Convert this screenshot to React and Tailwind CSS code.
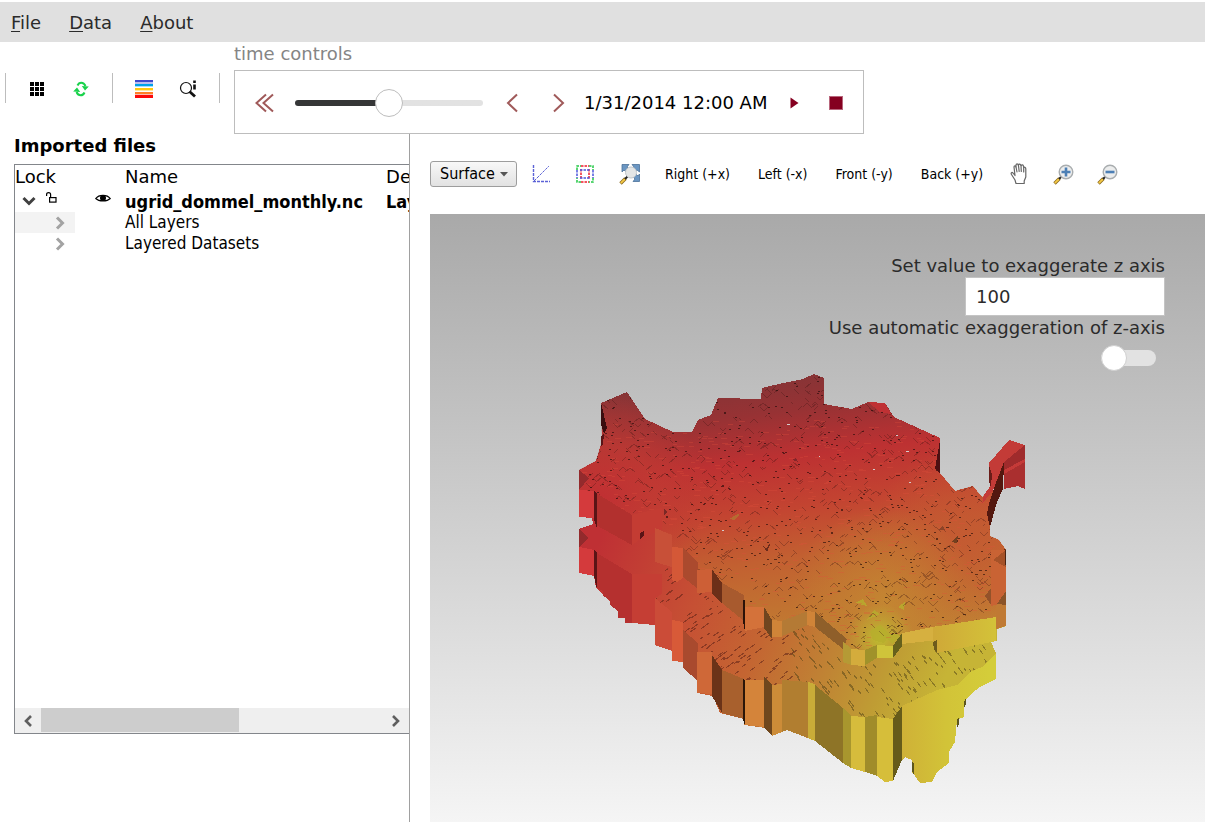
import React from "react";

const TOP_SURFACE =
  "579,470 596,461 602,441 601,403 627,392 645,419 673,432 692,432 698,420 711,415 718,398 761,399 762,388 783,383 803,379 814,374 824,378 824,404 852,409 868,402 885,403 894,417 940,438 940,473 955,491 973,486 982,497 993,486 990,527 990,536 999,540 1006,550 1006,600 996,617 902,633 893,648 877,645 865,650 843,647 847,639 815,612 807,611 782,621 772,620 763,607 744,607 743,595 722,583 712,569 698,570 698,562 683,548 672,547 672,535 655,528 662,508 632,515 596,493 594,491 579,490";

const BODY =
  "579,470 596,461 602,441 610,440 780,430 930,473 980,560 1006,600 1006,626 997,629 997,641 991,642 996,653 996,679 980,687 972,693 964,702 964,717 957,720 955,742 949,752 949,763 937,772 932,782 920,783 912,772 912,760 905,757 900,763 893,781 885,782 877,776 850,767 843,763 815,741 800,735 787,730 772,736 765,728 744,725 744,719 720,713 713,696 697,693 697,680 683,668 683,662 672,661 672,651 655,645 655,625 632,623 596,588 594,576 579,573 579,529 593,524 592,518 579,517";

const SHELF =
  "579,547 579,529 593,524 640,530 655,560 700,590 745,630 800,625 850,665 893,660 940,650 991,642 996,653 980,668 957,685 937,690 902,706 893,719 851,716 815,685 772,685 744,680 721,670 698,652 683,630 655,598 632,574 597,553";

const LOWER_WALLS = [
  ["579,547 594,550 594,576 579,573", "#d43a3c"],
  ["579,529 589,538 579,547", "#932a2c"],
  ["597,553 632,574 632,623 625,623 625,618 618,618 618,611 610,605 610,600 603,596 603,591 597,588", "#b5302f"],
  ["594,549 597,553 597,589 594,576", "#5a1416"],
  ["632,574 662,574 662,594 655,598 655,625 632,623", "#c53e34"],
  ["655,598 672,612 672,651 655,645", "#cb4c38"],
  ["672,620 683,622 683,662 672,661", "#d85a38"],
  ["683,630 698,643 698,681 683,668", "#a94a2e"],
  ["697,652 712,652 712,694 697,693", "#cf6838"],
  ["712,655 722,670 722,713 712,696", "#6b3318"],
  ["722,670 744,679 744,719 722,713", "#a8602d"],
  ["745,680 764,680 764,727 745,725", "#d4843a"],
  ["743,679 745,680 745,725 743,719", "#2b1608"],
  ["764,677 772,685 772,736 764,727", "#6f471d"],
  ["772,685 782,684 782,732 772,736", "#cc8c38"],
  ["782,680 808,682 808,738 800,735 787,730 782,732", "#b17e30"],
  ["808,682 815,684 815,741 808,738", "#c9ac38"],
  ["815,685 843,708 843,763 815,741", "#8e7427"],
  ["843,708 851,716 851,768 843,763", "#a8962e"],
  ["851,716 865,717 865,772 851,768", "#d6bc3c"],
  ["865,717 877,715 877,776 865,772", "#a08c2a"],
  ["877,717 893,719 893,781 885,782 877,776", "#d6be3a"],
  ["893,719 902,706 902,760 893,781", "#665b1a"],
  [
    "902,706 937,690 957,685 970,672 982,667 996,653 996,679 980,687 972,693 964,702 964,717 957,720 955,742 949,752 949,763 937,772 932,782 920,783 912,772 912,760 905,757 902,759",
    "url(#yellowWall)",
  ],
  ["964,702 966,698 966,704 964,708", "#5c551c"],
  ["957,720 959,717 959,724 957,728", "#5c551c"],
  ["912,762 914,764 914,775 912,771", "#5c551c"],
];

const UPPER_WALLS = [
  ["579,490 594,491 594,518 579,517", "#d43a3c"],
  ["596,493 632,515 632,545 596,525", "#b2302e"],
  ["594,491 597,494 597,528 594,519", "#5a1416"],
  ["632,515 662,508 662,530 645,536 632,545", "#c43c33"],
  ["640,533 644,531 644,536 640,539", "#5a1416"],
  ["655,528 672,535 672,567 655,562", "#c85038"],
  ["672,547 683,548 683,578 677,582 672,580", "#d45837"],
  ["683,548 698,562 698,589 683,577", "#ab4a2e"],
  ["697,570 712,569 712,592 697,593", "#cd5f36"],
  ["712,569 722,583 722,604 712,593", "#6c2f18"],
  ["722,583 744,595 744,621 722,603", "#a85a2e"],
  ["745,607 764,607 764,627 745,631", "#d4723a"],
  ["743,600 745,600 745,631 743,621", "#2b1208"],
  ["764,607 772,620 772,639 764,628", "#70451f"],
  ["772,620 782,621 782,637 772,637", "#cf8438"],
  ["782,621 808,611 808,625 782,636", "#b47a35"],
  ["807,611 815,612 815,627 807,625", "#d08438"],
  ["815,612 847,639 843,649 815,627", "#8f5f2a"],
  ["843,642 851,648 851,665 843,662", "#b59a35"],
  ["851,649 865,650 865,666 851,665", "#d4ac3c"],
  ["865,650 877,645 877,658 865,665", "#a0922a"],
  ["877,645 893,646 893,658 877,658", "#cfc43a"],
  ["893,646 902,633 902,646 893,658", "#66601c"],
  ["902,633 937,626 937,640 902,644", "#d6b040"],
  ["933,627 996,617 996,641 937,653 933,643", "url(#upperYellow)"],
  ["933,642 937,640 937,652 934,650", "#6d5a1c"],
  ["996,600 1006,600 1006,626 996,629", "#c07a34"],
  ["991,550 1006,550 1006,602 991,606", "#c96334"],
  ["985,596 991,588 991,605", "#94522a"],
  ["993,560 1006,550 1006,567", "#a65228"],
  ["997,604 1006,591 1006,605", "#8c5428"],
  ["1005,550 1006,550 1006,565 1005,565", "#4b2412"],
];

const DETAILS = [
  ["579,470 589,478 579,490", "#932a2c"],
  ["601,403 607,428 604,434 601,424", "#3a0d0f"],
  ["601,436 604,434 603,444 601,447", "#5a1416"],
  ["940,440 940,473 935,469", "#4c1012"],
  ["868,402 885,403 891,414 880,412", "#bf3134"],
  ["989,463 1009,440 1025,445 1003,463 1001,480 982,504 984,495 991,485", "#c33b37"],
  ["1004,462 1025,445 1025,460 1004,472", "#9f2b2c"],
  ["1004,474 1025,461 1025,489 1018,486 1004,489", "#aa2f2f"],
  ["1004,470 1025,459 1025,462 1004,474", "#c53a38"],
  ["1004,462 1003,489 997,502 990,527 987,514 989,503 997,480", "#54180f"],
  ["989,466 992,474 991,487 989,482", "#6a1c18"],
  ["792,460 796,458 798,462", "#84262a"],
  ["729,519 738,514 740,515 734,520", "#b66b31"],
  ["761,543 766,549 771,542 767,552", "#6c2c1c"],
  ["951,542 958,536 957,543", "#74401f"],
  ["938,530 943,526 945,530", "#8d4428"],
  ["664,509 668,512 664,515", "#7c2825"],
];

const GREEN_PATCHES = [
  "870,631 880,625 890,634 884,643 873,640",
  "855,603 863,599 867,606",
  "885,636 895,632 900,636 892,644",
  "867,620 874,610 880,614",
  "898,607 905,602 904,610",
];

function createRandom(seed) {
  let state = seed;
  return () => {
    state = (state * 1664525 + 1013904223) % 4294967296;
    return state / 4294967296;
  };
}

function scatter(seed, count, [x0, y0, x1, y1], makeMark) {
  const random = createRandom(seed);
  let path = "";
  for (let i = 0; i < count; i += 1) {
    const x = Math.round(x0 + random() * (x1 - x0));
    const y = Math.round(y0 + random() * (y1 - y0));
    path += makeMark(x, y, random);
  }
  return path;
}

const cellMarks = scatter(17, 950, [578, 376, 1008, 652], (x, y, random) => {
  const run = 2 + Math.round(random() * 4);
  const slope = random() > 0.45 ? -1 : 1;
  const rise = Math.round(run * 0.9 * slope);
  const hook = random() > 0.7 ? `l${run} ${-rise}` : "";
  return `M${x} ${y}l${run} ${rise}${hook}`;
});
const cellDots = scatter(41, 1000, [578, 376, 1008, 652], (x, y) => `M${x} ${y}h1.5`);
const cellHighlights = scatter(93, 700, [578, 420, 1008, 652], (x, y, random) => {
  return `M${x} ${y}h${3 + Math.round(random() * 4)}`;
});
const ridgeMarks = scatter(7, 230, [650, 570, 790, 690], (x, y, random) => {
  const run = 3 + Math.round(random() * 5);
  return `M${x} ${y}l${run} ${-Math.round(run * 0.7)}`;
});
const ridgeMarksRight = scatter(29, 280, [790, 620, 996, 720], (x, y, random) => {
  const run = 2 + Math.round(random() * 3);
  return `M${x} ${y}l${run} ${Math.round(run * 1.3)}`;
});

function Facets({ items }) {
  return items.map(([points, fill]) => <polygon key={points} points={points} fill={fill} />);
}

function TerrainModel() {
  return (
    <svg
      className="absolute inset-0 h-full w-full"
      viewBox="430 214 775 608"
      preserveAspectRatio="xMinYMin meet"
      role="img"
      aria-label="Layered terrain model"
    >
      <defs>
        <linearGradient id="surface" gradientUnits="userSpaceOnUse" x1="775" y1="376" x2="810" y2="650">
          <stop offset="0" stopColor="#863436" />
          <stop offset="0.13" stopColor="#973234" />
          <stop offset="0.3" stopColor="#bd3132" />
          <stop offset="0.48" stopColor="#c34431" />
          <stop offset="0.66" stopColor="#c26031" />
          <stop offset="0.85" stopColor="#c17431" />
          <stop offset="1" stopColor="#c08334" />
        </linearGradient>
        <linearGradient id="shelf" gradientUnits="userSpaceOnUse" x1="600" y1="540" x2="940" y2="690">
          <stop offset="0" stopColor="#bf3034" />
          <stop offset="0.3" stopColor="#c65034" />
          <stop offset="0.5" stopColor="#c46532" />
          <stop offset="0.68" stopColor="#c08034" />
          <stop offset="0.85" stopColor="#bf9c34" />
          <stop offset="1" stopColor="#c6b436" />
        </linearGradient>
        <linearGradient id="yellowWall" gradientUnits="userSpaceOnUse" x1="902" y1="0" x2="990" y2="0">
          <stop offset="0" stopColor="#cfb137" />
          <stop offset="0.5" stopColor="#d2c338" />
          <stop offset="1" stopColor="#d4cd3a" />
        </linearGradient>
        <linearGradient id="upperYellow" x1="0" y1="0" x2="1" y2="0">
          <stop offset="0" stopColor="#cfa838" />
          <stop offset="1" stopColor="#d3c239" />
        </linearGradient>
        <radialGradient id="redGlow" gradientUnits="userSpaceOnUse" cx="600" cy="500" r="110">
          <stop offset="0" stopColor="#c02f33" />
          <stop offset="0.5" stopColor="#c13a33" stopOpacity="0.7" />
          <stop offset="1" stopColor="#c13a33" stopOpacity="0" />
        </radialGradient>
        <radialGradient id="goldGlow" gradientUnits="userSpaceOnUse" cx="885" cy="602" r="95">
          <stop offset="0" stopColor="#c48a32" stopOpacity="0.8" />
          <stop offset="0.5" stopColor="#c38232" stopOpacity="0.5" />
          <stop offset="1" stopColor="#c38232" stopOpacity="0" />
        </radialGradient>
        <radialGradient id="limeGlow" gradientUnits="userSpaceOnUse" cx="880" cy="638" r="34">
          <stop offset="0" stopColor="#bcc02f" />
          <stop offset="0.5" stopColor="#bfa832" stopOpacity="0.7" />
          <stop offset="1" stopColor="#bfa832" stopOpacity="0" />
        </radialGradient>
        <radialGradient id="orangeGlow" gradientUnits="userSpaceOnUse" cx="960" cy="540" r="90">
          <stop offset="0" stopColor="#c45a32" stopOpacity="0.9" />
          <stop offset="1" stopColor="#c45a32" stopOpacity="0" />
        </radialGradient>
        <clipPath id="surfaceClip">
          <polygon points={TOP_SURFACE} />
        </clipPath>
        <clipPath id="shelfClip">
          <polygon points={SHELF} />
        </clipPath>
      </defs>

      <g shapeRendering="crispEdges">
        <polygon points={BODY} fill="url(#shelf)" />
        <g clipPath="url(#shelfClip)" fill="none">
          <path d={ridgeMarks} stroke="#5c2116" strokeOpacity="0.55" />
          <path d={ridgeMarksRight} stroke="#4f4216" strokeOpacity="0.5" />
        </g>
        <Facets items={LOWER_WALLS} />

        <polygon points={TOP_SURFACE} fill="url(#surface)" />
        <g clipPath="url(#surfaceClip)">
          <rect x="570" y="370" width="440" height="290" fill="url(#orangeGlow)" />
          <rect x="570" y="370" width="440" height="290" fill="url(#redGlow)" />
          <rect x="570" y="370" width="440" height="290" fill="url(#goldGlow)" />
          <rect x="570" y="370" width="440" height="290" fill="url(#limeGlow)" />
          {GREEN_PATCHES.map((points) => (
            <polygon key={points} points={points} fill="#b6ae2d" fillOpacity="0.8" />
          ))}
          <path d={cellHighlights} stroke="#e0503c" strokeOpacity="0.3" fill="none" />
          <path d={cellMarks} stroke="#3d1410" strokeOpacity="0.3" fill="none" />
          <path d={cellDots} stroke="#1d0806" strokeOpacity="0.6" fill="none" />
          <path d="M787 424h3M722 530h2M896 435h2M906 451h3M873 469h2M909 482h2M819 456h1" stroke="#d5cccc" fill="none" />
        </g>
        <Facets items={UPPER_WALLS} />
        <Facets items={DETAILS} />
      </g>
    </svg>
  );
}

function GridIcon() {
  return (
    <svg width="14" height="14" viewBox="0 0 14 14" fill="#000" aria-hidden="true">
      {[0, 5, 10].map((y) => [0, 5, 10].map((x) => <rect key={`${x}-${y}`} x={x} y={y} width="4" height="4" />))}
    </svg>
  );
}

function RefreshIcon() {
  return (
    <svg width="16" height="16" viewBox="0 0 16 16" fill="none" stroke="#19d24b" strokeWidth="2" aria-hidden="true">
      <path d="M4.500 4.500C6 1 10.500 0.500 12.500 5" />
      <path d="M11.500 11.500C10 15 5.500 15.500 3.500 11" />
      <path d="M8.800 5L15.800 5.400 12 9.400zM7.200 11L.2 10.600 4 6.600z" fill="#19d24b" stroke="none" />
    </svg>
  );
}

function ColorBarsIcon() {
  return (
    <svg width="18" height="18" viewBox="0 0 18 18" shapeRendering="crispEdges" aria-hidden="true">
      <rect width="18" height="18" fill="#fff" />
      <rect y="0" width="18" height="2" fill="#3f48cc" />
      <rect y="2" width="18" height="2" fill="#b9bdf0" />
      <rect y="4" width="18" height="2" fill="#00a2e8" />
      <rect y="6" width="18" height="1" fill="#a5def6" />
      <rect y="8" width="18" height="2" fill="#ffc90e" />
      <rect y="10" width="18" height="1" fill="#ffe9a0" />
      <rect y="12" width="18" height="2" fill="#ff7f27" />
      <rect y="14" width="18" height="1" fill="#ffb9b0" />
      <rect y="15" width="18" height="3" fill="#fb0a0a" />
    </svg>
  );
}

function InspectIcon() {
  return (
    <svg width="18" height="18" viewBox="0 0 18 18" fill="none" stroke="#111" aria-hidden="true">
      <circle cx="7" cy="8" r="5.500" strokeWidth="1.200" />
      <path d="M10.500 11.500l5.500 5" strokeWidth="2.800" />
      <path d="M15.500 0.500v2.500M15.500 4.500v5" strokeWidth="2.600" />
    </svg>
  );
}

function ChevronIcon({ direction, double = false }) {
  return (
    <svg width="20" height="20" viewBox="0 0 20 20" fill="none" stroke="#a05a5a" strokeWidth="2" aria-hidden="true">
      {double ? (
        <path d="M12 1.500L2.500 10l9.500 8.500M19 1.500L9.500 10l9.500 8.500" />
      ) : direction === "left" ? (
        <path d="M15 1.500L6 10l9 8.500" />
      ) : (
        <path d="M6 1.500L15 10l-9 8.500" />
      )}
    </svg>
  );
}

function AxesIcon() {
  return (
    <svg width="18" height="18" viewBox="0 0 18 18" fill="none" stroke="#5b62d6" strokeDasharray="3 1" aria-hidden="true">
      <path d="M1.500 0v16.500H18" strokeWidth="1.400" />
      <path d="M2 16L17 1" strokeWidth="1" />
    </svg>
  );
}

function BoundsIcon() {
  return (
    <svg width="18" height="18" viewBox="0 0 18 18" fill="none" strokeWidth="1.500" strokeDasharray="2.500 1" aria-hidden="true">
      <path d="M1 5V1h4M13 1h4v4M17 13v4h-4M5 17H1v-4" stroke="#22c744" />
      <path d="M5 1h8M5 17h8M5 4v10M13 4v10" stroke="#f01c2c" />
      <path d="M1 5v8M17 5v8M4 5h10M4 13h10" stroke="#4b55dd" />
    </svg>
  );
}

function MagnifierHandle() {
  return (
    <>
      <path d="M1.500 19.500L6.500 14.500" stroke="#8a6a20" strokeWidth="3.400" />
      <path d="M1.800 19.200L6 15" stroke="#f5c945" strokeWidth="1.800" />
      <path d="M6 15l2.500-2.500" stroke="#222" strokeWidth="2" />
    </>
  );
}

function FitIcon() {
  return (
    <svg width="21" height="21" viewBox="0 0 21 21" fill="none" aria-hidden="true">
      <MagnifierHandle />
      <path
        d="M3 0.500h7L8 3l2 2-3 3-2-2-2 2zM13 0.500h7.500V8L18 6l-2 2-3-3 2-2zM20.500 10v7.500H14L16 15l-2-2 3-3 2 2z"
        fill="#6b96c2"
        stroke="#4a7199"
        strokeWidth="0.800"
      />
      <circle cx="12" cy="8.500" r="5.500" fill="#e4e6e6" stroke="#c2c6c9" />
    </svg>
  );
}

function ZoomIcon({ plus = false }) {
  return (
    <svg width="21" height="21" viewBox="0 0 21 21" fill="none" aria-hidden="true">
      <MagnifierHandle />
      <circle cx="13" cy="8" r="6.800" fill="#eceded" stroke="#a9adaf" strokeWidth="1.400" />
      <path d={plus ? "M8.500 8h9M13 3.500v9" : "M8.500 8h9"} stroke="#4c7fb5" strokeWidth="2.600" />
    </svg>
  );
}

function HandIcon() {
  return (
    <svg width="18" height="22" viewBox="0 0 18 22" fill="#fff" stroke="#666" strokeWidth="1.200" strokeLinejoin="round" strokeLinecap="round" aria-hidden="true">
      <path d="M6 20.500L5 17 1.500 11.500C.5 9.500 2 9 3 10l2 2.500L4 4c0-1.500 1.800-1.500 2 0V2c.2-1.500 2-1.500 2.200 0l.3 0c.3-1.300 2-1.200 2.300.2l.4.300c.6-1 2-.7 2.200.5l.4 1.500c1-.7 2 .1 2 1.500v8l-1.600 4v2.500z" />
      <path d="M6 4l1 5M8.400 2l.8 6.500M11 2.500l.3 6M13.700 4.500v4.500" fill="none" />
    </svg>
  );
}

function LockIcon() {
  return (
    <svg width="11" height="11" viewBox="0 0 11 11" fill="none" stroke="#000" strokeWidth="1.200" aria-hidden="true">
      <rect x="3.600" y="5.600" width="6.400" height="4.500" />
      <path d="M.6 4V2.500C.6 1 1.500.6 2.600.6S4.600 1.500 4.600 2.500V5.500" />
    </svg>
  );
}

function EyeIcon() {
  return (
    <svg width="16" height="8" viewBox="0 0 16 8" aria-hidden="true">
      <path d="M.7 4.500C4 .3 12 .3 15.300 4.500 12 7.700 4 7.700.7 4.500z" fill="#fff" stroke="#000" strokeWidth="1.100" />
      <circle cx="8" cy="4" r="3" fill="#000" />
    </svg>
  );
}

function TreeArrow({ open = false }) {
  return (
    <svg width="14" height="14" viewBox="0 0 14 14" fill="none" stroke={open ? "#404040" : "#a3a3a3"} strokeWidth="3" aria-hidden="true">
      <path d={open ? "M1.500 3l5.500 5.500L12.500 3" : "M4 1.500L9.500 7 4 12.500"} />
    </svg>
  );
}

function ScrollArrow({ direction }) {
  return (
    <svg width="12" height="12" viewBox="0 0 12 12" fill="none" stroke="#5f5f5f" strokeWidth="2.600" aria-hidden="true">
      <path d={direction === "left" ? "M9 1L4 6l5 5" : "M3 1l5 5-5 5"} />
    </svg>
  );
}

function ToolButton({ label, children }) {
  return (
    <button type="button" aria-label={label} className="flex h-8 w-11 shrink-0 items-center justify-center">
      {children}
    </button>
  );
}

function Separator() {
  return <div className="h-[30px] w-px bg-[#bdbdbd]" />;
}

function MenuBar() {
  return (
    <nav className="mt-0.5 flex h-10 items-center gap-7 bg-[#e0e0e0] pt-0.5 pl-[11px] text-lg text-[#2b2b2b]">
      {["File", "Data", "About"].map((name) => (
        <button key={name} type="button">
          <span className="underline decoration-1 underline-offset-2">{name[0]}</span>
          {name.slice(1)}
        </button>
      ))}
    </nav>
  );
}

function TimeControls() {
  return (
    <section className="ml-3.5">
      <h2 className="h-7 text-lg leading-6 text-[#858585]">time controls</h2>
      <div className="flex h-16 items-center border border-[#bdbdbd] px-1.5 pt-0.5">
        <button type="button" aria-label="First step" className="flex w-[46px] justify-center">
          <ChevronIcon double />
        </button>
        <input
          type="range"
          aria-label="Time step"
          defaultValue="50"
          className="mr-1.5 ml-2 h-1.5 w-[188px] appearance-none rounded-full bg-linear-to-r from-[#353637] from-50% to-[#e2e2e2] to-50% [&::-webkit-slider-thumb]:size-7 [&::-webkit-slider-thumb]:appearance-none [&::-webkit-slider-thumb]:rounded-full [&::-webkit-slider-thumb]:border [&::-webkit-slider-thumb]:border-[#bdbdbd] [&::-webkit-slider-thumb]:bg-white"
        />
        <button type="button" aria-label="Previous step" className="flex w-[46px] justify-center">
          <ChevronIcon direction="left" />
        </button>
        <button type="button" aria-label="Next step" className="flex w-[46px] justify-center">
          <ChevronIcon direction="right" />
        </button>
        <time className="ml-[3px] text-lg whitespace-nowrap">1/31/2014 12:00 AM</time>
        <button type="button" aria-label="Play" className="ml-1.5 flex w-[42px] justify-center">
          <svg width="9" height="12" viewBox="0 0 9 12" aria-hidden="true">
            <path d="M0.500 0.500L8.500 6l-8 5.500z" fill="#850020" />
          </svg>
        </button>
        <button type="button" aria-label="Stop" className="flex w-[42px] justify-center">
          <span className="size-3.5 border border-[#b8667c] bg-[#850020]" />
        </button>
      </div>
    </section>
  );
}

function ImportedFiles() {
  return (
    <aside className="flex w-[410px] shrink-0 flex-col border-r border-[#a0a0a0] pl-3.5">
      <h2 className="h-[30px] text-lg leading-6 font-bold">Imported files</h2>
      <div className="mb-[88px] flex flex-1 flex-col overflow-hidden border border-r-0 border-[#83868b]">
        <div className="flex-1 overflow-hidden">
          <table className="w-[560px] table-fixed border-collapse text-left">
            <colgroup>
              <col className="w-[60px]" />
              <col className="w-[50px]" />
              <col className="w-[261px]" />
              <col />
            </colgroup>
            <thead className="text-lg leading-6">
              <tr className="h-[26px] align-top">
                <th className="font-normal" colSpan={2}>Lock</th>
                <th className="font-normal">Name</th>
                <th className="font-normal">Description</th>
              </tr>
            </thead>
            <tbody className="font-['DejaVu_Sans_Condensed','DejaVu_Sans',sans-serif] text-[17px] leading-[21px]">
              <tr className="h-[21px] text-lg leading-[21px] font-bold">
                <td>
                  <div className="flex gap-2.5 pl-[7px]">
                    <button type="button" aria-label="Collapse ugrid_dommel_monthly.nc">
                      <TreeArrow open />
                    </button>
                    <button type="button" aria-label="Lock" className="pb-2">
                      <LockIcon />
                    </button>
                  </div>
                </td>
                <td>
                  <button type="button" aria-label="Toggle visibility" className="flex pb-2 pl-5">
                    <EyeIcon />
                  </button>
                </td>
                <td>ugrid_dommel_monthly.nc</td>
                <td>Layered</td>
              </tr>
              <tr className="h-[21px]">
                <td className="bg-[#f3f3f3]">
                  <button type="button" aria-label="Expand All Layers" className="ml-[38px] flex">
                    <TreeArrow />
                  </button>
                </td>
                <td />
                <td>All Layers</td>
                <td />
              </tr>
              <tr className="h-[21px]">
                <td>
                  <button type="button" aria-label="Expand Layered Datasets" className="ml-[38px] flex">
                    <TreeArrow />
                  </button>
                </td>
                <td />
                <td>Layered Datasets</td>
                <td />
              </tr>
            </tbody>
          </table>
        </div>
        <div className="flex h-[25px] bg-[#efefef]">
          <button type="button" aria-label="Scroll left" className="flex w-[26px] items-center justify-center">
            <ScrollArrow direction="left" />
          </button>
          <div className="flex-1">
            <div className="h-6 w-[58%] bg-[#cdcdcd]" />
          </div>
          <button type="button" aria-label="Scroll right" className="flex w-[26px] items-center justify-center">
            <ScrollArrow direction="right" />
          </button>
        </div>
      </div>
    </aside>
  );
}

function ViewToolbar() {
  return (
    <div className="flex h-20 items-center font-['DejaVu_Sans_Condensed','DejaVu_Sans',sans-serif]">
      <div className="relative mr-0.5">
        <select
          aria-label="Representation"
          className="block h-[26px] w-[87px] appearance-none rounded-[3px] border border-[#9d9d9d] bg-linear-to-b from-[#f8f8f8] to-[#e2e2e2] pl-[9px] text-base leading-6"
        >
          <option>Surface</option>
        </select>
        <svg className="pointer-events-none absolute top-[11px] right-[9px]" width="8" height="5" viewBox="0 0 8 5" aria-hidden="true">
          <path d="M0 0h8L4 4.500z" fill="#555" />
        </svg>
      </div>
      <ToolButton label="Show axes"><AxesIcon /></ToolButton>
      <ToolButton label="Show bounding box"><BoundsIcon /></ToolButton>
      <ToolButton label="Fit to view"><FitIcon /></ToolButton>
      {["Right (+x)", "Left (-x)", "Front (-y)", "Back (+y)"].map((name) => (
        <button key={name} type="button" className="px-3.5 text-sm whitespace-nowrap">
          {name}
        </button>
      ))}
      <ToolButton label="Pan"><HandIcon /></ToolButton>
      <ToolButton label="Zoom in"><ZoomIcon plus /></ToolButton>
      <ToolButton label="Zoom out"><ZoomIcon /></ToolButton>
    </div>
  );
}

function Viewport() {
  return (
    <div className="relative flex-1 overflow-hidden bg-linear-to-b from-[#a9a9a9] to-[#f5f5f5]">
      <TerrainModel />
      <div className="relative flex flex-col items-end pt-10 pr-10 text-lg leading-[23px] text-[#2b2b2b]">
        <label htmlFor="z-scale">Set value to exaggerate z axis</label>
        <input id="z-scale" type="text" defaultValue="100" className="h-[39px] w-[200px] border border-[#c4c4c4] bg-white px-2.5" />
        <label htmlFor="auto-scale">Use automatic exaggeration of z-axis</label>
        <input
          id="auto-scale"
          type="checkbox"
          role="switch"
          className="relative mt-1.5 mr-[9px] h-[26px] w-[55px] appearance-none before:absolute before:inset-x-0 before:top-[5px] before:h-4 before:rounded-full before:bg-[#e2e2e2] after:absolute after:top-0 after:left-0 after:size-[26px] after:rounded-full after:border after:border-[#cfcfcf] after:bg-white"
        />
      </div>
    </div>
  );
}

export default function App() {
  return (
    <div className="flex min-h-screen flex-col overflow-hidden bg-white font-['DejaVu_Sans',Verdana,sans-serif] text-black">
      <MenuBar />
      <header className="flex">
        <div className="flex items-center pl-[5px]">
          <Separator />
          <div className="flex px-[9px] pt-0.5">
            <ToolButton label="Grid"><GridIcon /></ToolButton>
            <ToolButton label="Refresh"><RefreshIcon /></ToolButton>
          </div>
          <Separator />
          <div className="flex px-[9px] pt-0.5">
            <ToolButton label="Color legend"><ColorBarsIcon /></ToolButton>
            <ToolButton label="Identify"><InspectIcon /></ToolButton>
          </div>
          <Separator />
        </div>
        <TimeControls />
      </header>
      <main className="flex flex-1">
        <ImportedFiles />
        <section className="flex min-w-0 flex-1 flex-col pl-5">
          <ViewToolbar />
          <Viewport />
        </section>
      </main>
    </div>
  );
}
